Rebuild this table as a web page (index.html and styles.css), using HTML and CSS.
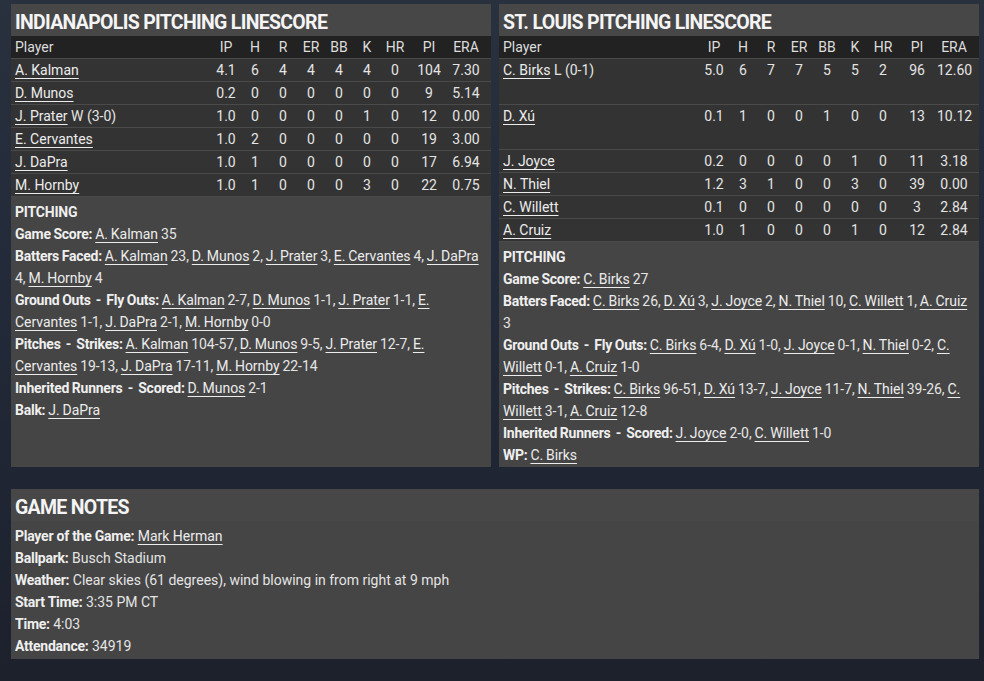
FILE: index.html
```html
<!DOCTYPE html>
<html lang="en">
<head>
<meta charset="utf-8">
<title>Pitching Linescore</title>
<link rel="stylesheet" href="styles.css">
</head>
<body>
<div class="page">
  <div class="top">
    <section class="panel">
      <h2 class="title">INDIANAPOLIS PITCHING LINESCORE</h2>
      <div class="table">
        <div class="row head"><span class="name">Player</span><span>IP</span><span>H</span><span>R</span><span>ER</span><span>BB</span><span>K</span><span>HR</span><span>PI</span><span>ERA</span></div>
        <div class="row"><span class="name"><a>A. Kalman</a></span><span>4.1</span><span>6</span><span>4</span><span>4</span><span>4</span><span>4</span><span>0</span><span>104</span><span>7.30</span></div>
        <div class="row"><span class="name"><a>D. Munos</a></span><span>0.2</span><span>0</span><span>0</span><span>0</span><span>0</span><span>0</span><span>0</span><span>9</span><span>5.14</span></div>
        <div class="row"><span class="name"><a>J. Prater</a> W (3-0)</span><span>1.0</span><span>0</span><span>0</span><span>0</span><span>0</span><span>1</span><span>0</span><span>12</span><span>0.00</span></div>
        <div class="row"><span class="name"><a>E. Cervantes</a></span><span>1.0</span><span>2</span><span>0</span><span>0</span><span>0</span><span>0</span><span>0</span><span>19</span><span>3.00</span></div>
        <div class="row"><span class="name"><a>J. DaPra</a></span><span>1.0</span><span>1</span><span>0</span><span>0</span><span>0</span><span>0</span><span>0</span><span>17</span><span>6.94</span></div>
        <div class="row"><span class="name"><a>M. Hornby</a></span><span>1.0</span><span>1</span><span>0</span><span>0</span><span>0</span><span>3</span><span>0</span><span>22</span><span>0.75</span></div>
      </div>
      <div class="notes pitch">
        <div class="sub">PITCHING</div>
        <p><b>Game Score:</b> <a>A. Kalman</a> 35</p>
        <p><b>Batters Faced:</b> <a>A. Kalman</a> 23, <a>D. Munos</a> 2, <a>J. Prater</a> 3, <a>E. Cervantes</a> 4, <a>J. DaPra</a> 4, <a>M. Hornby</a> 4</p>
        <p><b>Ground Outs <span class="dash">-</span> Fly Outs:</b> <a>A. Kalman</a> 2-7, <a>D. Munos</a> 1-1, <a>J. Prater</a> 1-1, <a>E. Cervantes</a> 1-1, <a>J. DaPra</a> 2-1, <a>M. Hornby</a> 0-0</p>
        <p><b>Pitches <span class="dash">-</span> Strikes:</b> <a>A. Kalman</a> 104-57, <a>D. Munos</a> 9-5, <a>J. Prater</a> 12-7, <a>E. Cervantes</a> 19-13, <a>J. DaPra</a> 17-11, <a>M. Hornby</a> 22-14</p>
        <p><b>Inherited Runners <span class="dash">-</span> Scored:</b> <a>D. Munos</a> 2-1</p>
        <p><b>Balk:</b> <a>J. DaPra</a></p>
      </div>
    </section>
    <section class="panel">
      <h2 class="title">ST. LOUIS PITCHING LINESCORE</h2>
      <div class="table">
        <div class="row head"><span class="name">Player</span><span>IP</span><span>H</span><span>R</span><span>ER</span><span>BB</span><span>K</span><span>HR</span><span>PI</span><span>ERA</span></div>
        <div class="row tall"><span class="name"><a>C. Birks</a> L (0-1)</span><span>5.0</span><span>6</span><span>7</span><span>7</span><span>5</span><span>5</span><span>2</span><span>96</span><span>12.60</span></div>
        <div class="row tall"><span class="name"><a>D. Xú</a></span><span>0.1</span><span>1</span><span>0</span><span>0</span><span>1</span><span>0</span><span>0</span><span>13</span><span>10.12</span></div>
        <div class="row"><span class="name"><a>J. Joyce</a></span><span>0.2</span><span>0</span><span>0</span><span>0</span><span>0</span><span>1</span><span>0</span><span>11</span><span>3.18</span></div>
        <div class="row"><span class="name"><a>N. Thiel</a></span><span>1.2</span><span>3</span><span>1</span><span>0</span><span>0</span><span>3</span><span>0</span><span>39</span><span>0.00</span></div>
        <div class="row"><span class="name"><a>C. Willett</a></span><span>0.1</span><span>0</span><span>0</span><span>0</span><span>0</span><span>0</span><span>0</span><span>3</span><span>2.84</span></div>
        <div class="row"><span class="name"><a>A. Cruiz</a></span><span>1.0</span><span>1</span><span>0</span><span>0</span><span>0</span><span>1</span><span>0</span><span>12</span><span>2.84</span></div>
      </div>
      <div class="notes pitch">
        <div class="sub">PITCHING</div>
        <p><b>Game Score:</b> <a>C. Birks</a> 27</p>
        <p><b>Batters Faced:</b> <a>C. Birks</a> 26, <a>D. Xú</a> 3, <a>J. Joyce</a> 2, <a>N. Thiel</a> 10, <a>C. Willett</a> 1, <a>A. Cruiz</a> 3</p>
        <p><b>Ground Outs <span class="dash">-</span> Fly Outs:</b> <a>C. Birks</a> 6-4, <a>D. Xú</a> 1-0, <a>J. Joyce</a> 0-1, <a>N. Thiel</a> 0-2, <a>C. Willett</a> 0-1, <a>A. Cruiz</a> 1-0</p>
        <p><b>Pitches <span class="dash">-</span> Strikes:</b> <a>C. Birks</a> 96-51, <a>D. Xú</a> 13-7, <a>J. Joyce</a> 11-7, <a>N. Thiel</a> 39-26, <a>C. Willett</a> 3-1, <a>A. Cruiz</a> 12-8</p>
        <p><b>Inherited Runners <span class="dash">-</span> Scored:</b> <a>J. Joyce</a> 2-0, <a>C. Willett</a> 1-0</p>
        <p><b>WP:</b> <a>C. Birks</a></p>
      </div>
    </section>
  </div>
  <section class="panel game">
    <h2 class="title">GAME NOTES</h2>
    <div class="notes">
      <p><b>Player of the Game:</b> <a>Mark Herman</a></p>
      <p><b>Ballpark:</b> Busch Stadium</p>
      <p><b>Weather:</b> Clear skies (61 degrees), wind blowing in from right at 9 mph</p>
      <p><b>Start Time:</b> 3:35 PM CT</p>
      <p><b>Time:</b> 4:03</p>
      <p><b>Attendance:</b> 34919</p>
    </div>
  </section>
</div>
</body>
</html>
```
FILE: styles.css
```css
* { box-sizing: border-box; }
html, body { margin: 0; padding: 0; }
body {
  width: 984px;
  height: 681px;
  overflow: hidden;
  font-family: Roboto, "Liberation Sans", sans-serif;
  font-size: 14px;
  color: #e4e4e4;
  background: linear-gradient(180deg, #29313f 0%, #222938 45%, #1c212c 100%);
}
.page {
  padding: 4px 5px 0 11px;
  display: flex;
  flex-direction: column;
  gap: 22px;
}
.top {
  display: grid;
  grid-template-columns: 480px 480px;
  gap: 8px;
}
.panel {
  background: #454545;
  display: flex;
  flex-direction: column;
}
.title {
  margin: 0;
  height: 32px;
  padding: 5px 4px 0 4px;
  line-height: 27px;
  font-size: 19.5px;
  font-weight: 700;
  letter-spacing: -0.7px;
  color: #f4f4f4;
  background: #474747;
}
.table { background: #333333; }
.row {
  display: grid;
  grid-template-columns: 200px 30px 28px 28px 28px 28px 28px 28px 40px 34px;
  height: 23px;
  line-height: 23px;
  border-bottom: 1px solid #4a4a4a;
}
.row span { text-align: center; white-space: nowrap; }
.row .name { text-align: left; padding-left: 4px; }
.row.head { background: #222222; color: #dddddd; }
.row.tall { height: 45.5px; }
a { color: #ececec; text-decoration: underline; text-underline-offset: 3px; }
.notes {
  flex: 1;
  background: #454545;
  padding: 4px 4px 1px 4px;
}
.notes.pitch { word-spacing: -0.5px; letter-spacing: -0.05px; }
.notes p, .sub { margin: 0; line-height: 22px; }
.sub { font-weight: 700; color: #efefef; letter-spacing: -0.2px; }
b { font-weight: 700; color: #efefef; letter-spacing: -0.25px; }
.dash { padding: 0 2.5px; }
.game .notes { padding-bottom: 2px; }
```
